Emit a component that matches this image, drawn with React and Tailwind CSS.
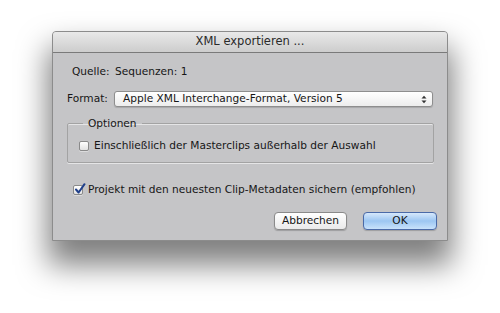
import React from "react";

const font = { fontFamily: '"DejaVu Sans", "Liberation Sans", sans-serif' };

function Checkbox({ checked }) {
  return (
    <span className="relative flex h-[10px] w-[10px] shrink-0 items-center justify-center rounded-[2px] border border-[#8a8a8a] bg-gradient-to-b from-white to-[#e2e2e2] shadow-[0_1px_0_rgba(255,255,255,0.4)]">
      {checked && (
        <svg width="12" height="12" viewBox="0 0 12 12" className="absolute -top-[3px] left-[0px]">
          <path d="M2 6.5 L4.6 9.5 L10.5 1.2" fill="none" stroke="#1f3f8a" strokeWidth="2" strokeLinecap="round" strokeLinejoin="round" />
        </svg>
      )}
    </span>
  );
}

export default function App() {
  return (
    <div className="h-[313px] w-[500px] overflow-hidden bg-white pl-[52px] pt-[31px] text-[#161616]" style={font}>
      <div className="flex h-[210px] w-[396px] flex-col overflow-hidden rounded-t-[4px] border border-[#8c8c8c] bg-[#c5c5c7] shadow-[0_20px_30px_4px_rgba(0,0,0,0.5)]">
        {/* title bar */}
        <div className="flex h-[21px] shrink-0 items-center justify-center border-b border-[#7a7a7a] bg-gradient-to-b from-[#e9e9e9] to-[#cdcdcd] text-[11.5px] text-[#2a2a2a]">
          XML exportieren ...
        </div>

        <div className="flex flex-1 flex-col pl-[14px] pr-[10px] text-[10.6px]">
          {/* Quelle */}
          <div className="mt-[12px] flex h-[14px] items-center">
            <span className="ml-[5px] w-[43px]">Quelle:</span>
            <span>Sequenzen: 1</span>
          </div>

          {/* Format */}
          <div className="mt-[12px] flex h-[16px] items-center">
            <span className="w-[47px]">Format:</span>
            <div className="flex h-[16px] w-[319px] items-center justify-between rounded-[3px] border border-[#8e8e8e] bg-gradient-to-b from-white to-[#ededed] pl-[8px] pr-[5px] shadow-[0_1px_1px_rgba(0,0,0,0.15)]">
              <span>Apple XML Interchange-Format, Version 5</span>
              <svg width="6" height="9" viewBox="0 0 6 9">
                <path d="M0.5 3.5 L3 0.8 L5.5 3.5 Z" fill="#333" />
                <path d="M0.5 5.5 L3 8.2 L5.5 5.5 Z" fill="#333" />
              </svg>
            </div>
          </div>

          {/* Optionen group */}
          <fieldset className="mt-[9px] h-[47px] w-[367px] rounded-[2px] border border-[#a3a3a3] pl-[11px] shadow-[0_1px_0_rgba(255,255,255,0.55),inset_0_1px_0_rgba(255,255,255,0.55)]">
            <legend className="ml-[4px] px-[5px] leading-[14px]">Optionen</legend>
            <div className="mt-[8px] flex items-center gap-[5px]">
              <Checkbox />
              <span>Einschließlich der Masterclips außerhalb der Auswahl</span>
            </div>
          </fieldset>

          {/* Projekt checkbox */}
          <div className="mt-[21px] flex h-[12px] items-center gap-[5px] pl-[6px]">
            <Checkbox checked />
            <span>Projekt mit den neuesten Clip-Metadaten sichern (empfohlen)</span>
          </div>

          {/* buttons */}
          <div className="mt-[16px] flex justify-end gap-[16px] pr-[0px]">
            <button className="flex h-[18px] w-[73px] items-center justify-center rounded-[4px] border border-[#8a8a8a] bg-gradient-to-b from-white to-[#eaeaea] text-[10.6px] text-[#161616] shadow-[0_1px_1px_rgba(0,0,0,0.2)]">
              Abbrechen
            </button>
            <button className="flex h-[18px] w-[74px] items-center justify-center rounded-[4px] border border-[#4a6aa8] bg-gradient-to-b from-[#d6e8fb] via-[#9cc6f2] to-[#c8e2fb] text-[10.6px] text-[#161616] shadow-[0_1px_1px_rgba(0,0,0,0.2)]">
              OK
            </button>
          </div>
        </div>
      </div>
    </div>
  );
}
